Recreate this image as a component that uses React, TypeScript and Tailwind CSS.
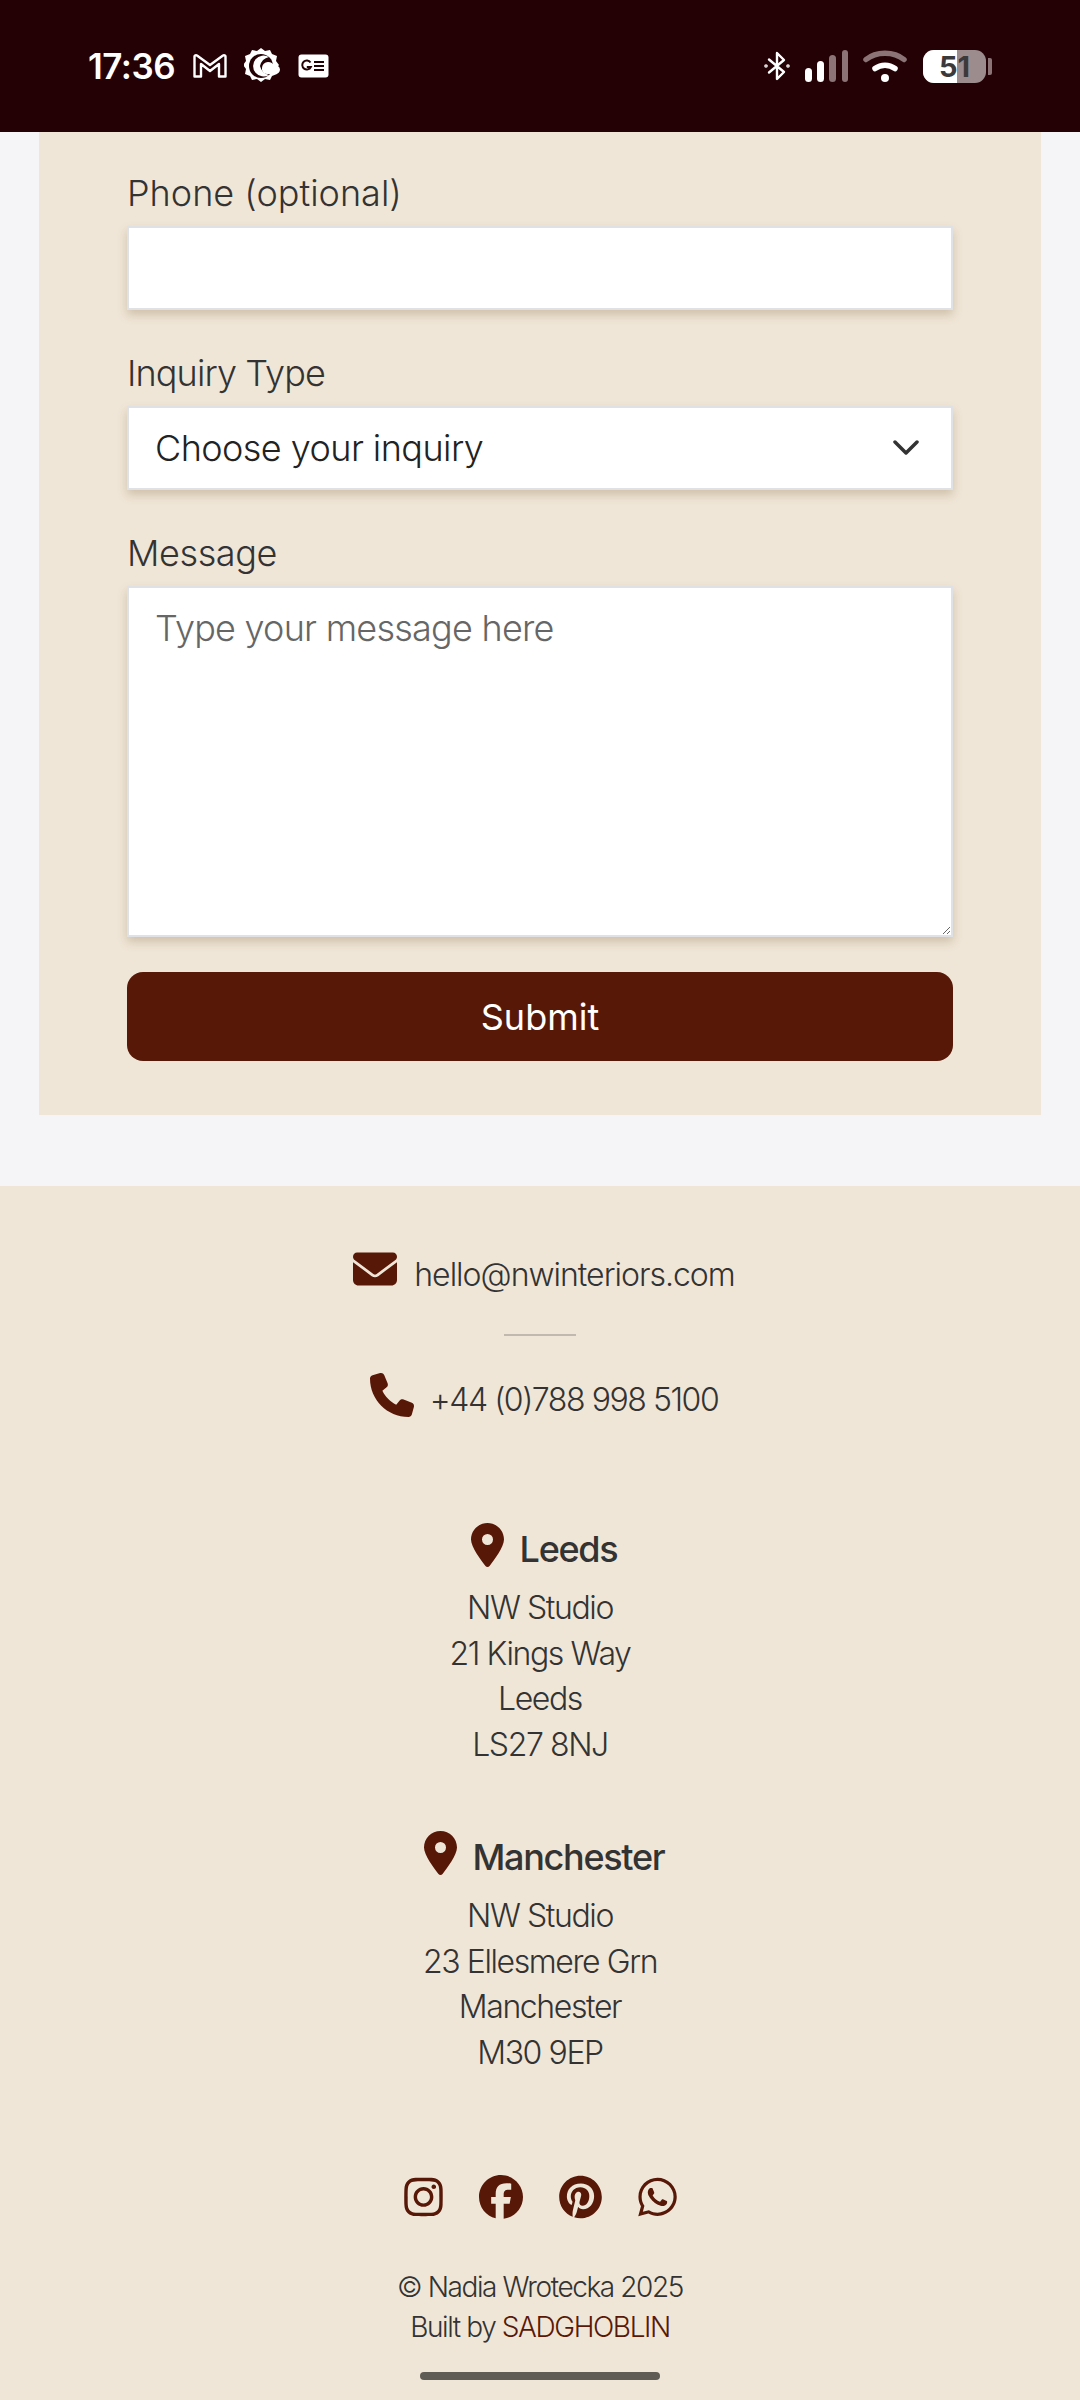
import { FaEnvelope, FaPhone, FaLocationDot, FaInstagram, FaFacebook, FaPinterest, FaWhatsapp } from 'react-icons/fa6';

function StatusBar() {
  return (
    <div className="relative z-10 h-[132px] shrink-0 bg-[#240105] flex items-center justify-between pl-[88px] pr-[88px] text-white">
      <div className="flex items-center">
        <span className="text-[35px] font-semibold leading-none tracking-[-0.5px] w-[105px] font-['Inter',sans-serif]">17:36</span>
        {/* gmail */}
        <svg width="34" height="24" viewBox="0 0 34 24" fill="none" stroke="white" strokeWidth="2.4" strokeLinejoin="round">
          <path d="M1.5 2.5 C1.5 1.5 3 1 4 1.5 L17 11 L30 1.5 C31 1 32.5 1.5 32.5 2.5 V22.5 H26 V10 L17 17 L8 10 V22.5 H1.5 Z" />
        </svg>
        {/* weather */}
        <svg className="ml-[17px]" width="38" height="38" viewBox="0 0 38 38" fill="none">
          <path d="M17 1 l4 3 5-1 2 4 5 2-1 5 3 4-3 4 1 5-5 2-2 4-5-1-4 3-4-3-5 1-2-4-5-2 1-5-3-4 3-4-1-5 5-2 2-4 5 1z" fill="white" />
          <circle cx="17" cy="19" r="12" fill="#240105" />
          <path d="M25 10 A10.5 10.5 0 1 0 25 28 A12 12 0 0 1 16 19 A12 12 0 0 1 25 10 Z" fill="white" />
          <path d="M18 21 a6 6 0 0 1 6-6 c3 0 5 1.500 6 3.500 a4.500 4.500 0 0 1 6 4 a4.500 4.500 0 0 1-4.500 4.500 H23 a5 5 0 0 1-5-6z" fill="white" />
        </svg>
        {/* news */}
        <svg className="ml-[16px]" width="31" height="24" viewBox="0 0 31 24">
          <rect x="0.5" y="0.500" width="30" height="23" rx="3" fill="white" />
          <path d="M12.500 8.500 A4.500 4.500 0 1 0 12.800 13 H8.800" fill="none" stroke="#240105" strokeWidth="2" />
          <path d="M16 8 H26 M16 12 H26 M16 16 H26" stroke="#240105" strokeWidth="2" />
        </svg>
      </div>
      <div className="flex items-center">
        {/* bluetooth */}
        <svg width="26" height="32" viewBox="0 0 26 32" fill="none" stroke="white" strokeWidth="2.400" strokeLinecap="round" strokeLinejoin="round">
          <path d="M5 9.500 L20 22 L13 29 V3 L20 10 L5 22.500" />
          <circle cx="2" cy="16" r="0.600" fill="white" />
          <circle cx="24" cy="16" r="0.600" fill="white" />
        </svg>
        {/* signal */}
        <svg className="ml-[15px]" width="44" height="32" viewBox="0 0 44 32">
          <rect x="0" y="18" width="7" height="14" rx="3.500" fill="white" />
          <rect x="12" y="11" width="7" height="21" rx="3.500" fill="white" />
          <rect x="24" y="5" width="7" height="27" rx="3.500" fill="#8c7376" />
          <rect x="37" y="0" width="6" height="32" rx="3" fill="#8c7376" />
        </svg>
        {/* wifi */}
        <svg className="ml-[14px]" width="44" height="33" viewBox="0 0 44 33" fill="none" strokeLinecap="round">
          <path d="M3 9.500 C13 1 31 1 41 9.500" stroke="#8c7376" strokeWidth="5.500" />
          <path d="M12 18.500 C18 14 26 14 32 18.500" stroke="white" strokeWidth="5.500" />
          <circle cx="22" cy="28" r="4" fill="white" />
        </svg>
        {/* battery */}
        <div className="ml-[16px] relative w-[63px] h-[33px] rounded-[11px] overflow-hidden bg-[#9c8c8d] flex">
          <div className="w-[34px] h-full bg-white" />
          <span className="absolute inset-0 flex items-center justify-center text-[29px] font-bold leading-none text-[#3a3a3c] font-['Inter',sans-serif]">51</span>
        </div>
        <div className="ml-[2px] w-[4px] h-[17px] rounded-r-[2px] bg-[#8c7376]" />
      </div>
    </div>
  );
}

function Field({ label, tracking, first, children }: { label: string; tracking: string; first?: boolean; children: React.ReactNode }) {
  return (
    <div className={first ? 'mt-[40px]' : 'mt-[42px]'}>
      <label className={`block h-[54px] text-[36px] leading-[42px] font-light text-[#333] ${tracking}`}>{label}</label>
      {children}
    </div>
  );
}

function Office({ city, lines, gap }: { city: string; lines: string[]; gap: string }) {
  return (
    <div className={gap}>
      <div className="flex items-center justify-center gap-[16px] h-[44px] pl-[8px]">
        <FaLocationDot className="text-[#581807] w-[33px] h-[44px] -mt-[8px]" />
        <span className="text-[36px] leading-none font-medium tracking-[-1.3px] text-[#333]">{city}</span>
      </div>
      <div className="mt-[14px] text-[32px] leading-[45.700px] font-light tracking-[-1.4px] text-[#333]">
        {lines.map((l) => (
          <div key={l}>{l}</div>
        ))}
      </div>
    </div>
  );
}

export default function App() {
  const inputCls = 'block w-full border-2 border-[#dfe1e5] bg-white shadow-[0_5px_9px_rgba(110,85,40,0.25)] outline-none';

  return (
    <div className="w-[1080px] h-[2400px] overflow-hidden bg-[#f5f5f8] flex flex-col font-['Inter',sans-serif]">
      <StatusBar />

      {/* form card */}
      <div className="mx-[39px] bg-[#f0e6d7] px-[88px] pb-[54px]">
        <div className="h-0 shadow-[0_5px_9px_rgba(110,85,40,0.25)]" />
        <Field first label="Phone (optional)" tracking="tracking-normal">
          <input className={`${inputCls} h-[84px]`} />
        </Field>
        <Field label="Inquiry Type" tracking="tracking-[-0.9px]">
          <div className="relative">
            <select className={`${inputCls} h-[84px] appearance-none px-[26px] text-[36px] tracking-[-0.56px] text-[#222] font-light`}>
              <option>Choose your inquiry</option>
            </select>
            <svg className="absolute right-[34px] top-[33px]" width="26" height="17" viewBox="0 0 26 17" fill="none" stroke="#333" strokeWidth="3.500" strokeLinecap="round" strokeLinejoin="round">
              <path d="M2 3 L13 14 L24 3" />
            </svg>
          </div>
        </Field>
        <Field label="Message" tracking="tracking-[-0.4px]">
          <textarea
            className={`${inputCls} h-[351px] px-[26px] py-[13px] text-[36px] tracking-[-0.76px] font-light placeholder:text-[#666]`}
            placeholder="Type your message here"
          />
        </Field>
        <button className="mt-[35px] w-full h-[89px] rounded-[16px] bg-[#581807] text-white text-[36px] font-normal">Submit</button>
      </div>

      {/* footer */}
      <div className="mt-[71px] flex-1 bg-[#f0e6d7] relative text-center">
        <div className="pt-[67px] pl-[8px] flex items-center justify-center gap-[17px] h-[111px]">
          <FaEnvelope className="text-[#581807] w-[44px] h-[44px] -mt-[12px]" />
          <span className="text-[32px] leading-none font-light tracking-[-1px] text-[#333]">hello@nwinteriors.com</span>
        </div>
        <div className="mx-auto mt-[37px] w-[72px] h-[2px] bg-[#c2b9ae]" />
        <div className="mt-[42px] pl-[8px] flex items-center justify-center gap-[16px] h-[44px]">
          <FaPhone className="text-[#581807] w-[44px] h-[44px] -mt-[10px]" />
          <span className="text-[32px] leading-none font-light tracking-[-1.45px] text-[#333]">+44 (0)788 998 5100</span>
        </div>

        <Office gap="mt-[105px]" city="Leeds" lines={['NW Studio', '21 Kings Way', 'Leeds', 'LS27 8NJ']} />
        <Office gap="mt-[67px]" city="Manchester" lines={['NW Studio', '23 Ellesmere Grn', 'Manchester', 'M30 9EP']} />

        <div className="mt-[99px] flex items-center justify-center gap-[36px] text-[#581807]">
          <FaInstagram className="w-[39px] h-[44px]" />
          <FaFacebook className="w-[44px] h-[44px]" />
          <FaPinterest className="w-[43px] h-[44px]" />
          <FaWhatsapp className="w-[39px] h-[44px]" />
        </div>

        <div className="mt-[48px] text-[28px] leading-[40px] font-light tracking-[-1.4px] text-[#333]">
          <div>© Nadia Wrotecka 2025</div>
          <div>
            Built by <span className="text-[#581807]">SADGHOBLIN</span>
          </div>
        </div>

        <div className="absolute left-[420px] top-[1186px] w-[240px] h-[8px] rounded-full bg-[#5f5c55]" />
      </div>
    </div>
  );
}
